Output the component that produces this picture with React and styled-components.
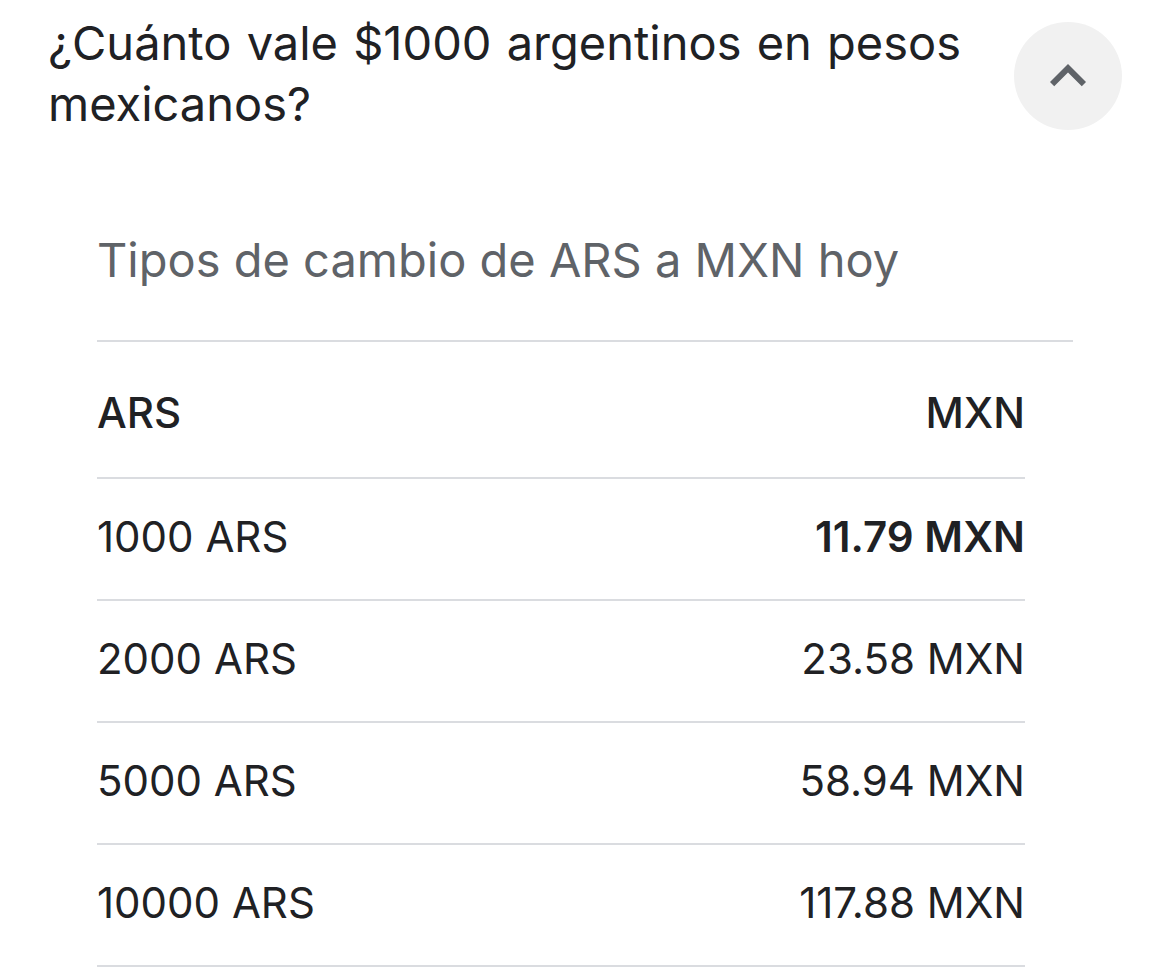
import React from 'react'
import styled, { createGlobalStyle } from 'styled-components'

const GlobalStyle = createGlobalStyle`
  body {
    margin: 0;
    background: #fff;
    font-family: Inter, Roboto, "Liberation Sans", sans-serif;
    color: #202124;
  }
`

const rates = [
  { ars: '1000 ARS', mxn: '11.79 MXN', strong: true },
  { ars: '2000 ARS', mxn: '23.58 MXN' },
  { ars: '5000 ARS', mxn: '58.94 MXN' },
  { ars: '10000 ARS', mxn: '117.88 MXN' },
]

export default function App() {
  return (
    <Page>
      <GlobalStyle />
      <Header>
        <Question>¿Cuánto vale $1000 argentinos en pesos mexicanos?</Question>
        <ToggleButton aria-label='Contraer'>
          <svg width='72' height='72' viewBox='0 0 24 24'>
            <path fill='#5f6368' d='M7.41 15.41L12 10.83l4.59 4.58L18 14l-6-6-6 6z' />
          </svg>
        </ToggleButton>
      </Header>
      <Card>
        <CardTitle>Tipos de cambio de ARS a MXN hoy</CardTitle>
        <Table>
          <HeadRow>
            <span>ARS</span>
            <span>MXN</span>
          </HeadRow>
          {rates.map(r => (
            <Row key={r.ars}>
              <span>{r.ars}</span>
              <Value strong={r.strong}>{r.mxn}</Value>
            </Row>
          ))}
        </Table>
      </Card>
    </Page>
  )
}

const Page = styled.div`
  width: 1170px;
  height: 968px;
  overflow: hidden;
`

const Header = styled.div`
  display: flex;
  justify-content: space-between;
  align-items: flex-start;
  padding: 12px 48px 0 48px;
`

const Question = styled.h1`
  margin: 0;
  max-width: 940px;
  font-size: 47px;
  line-height: 61px;
  font-weight: 400;
  word-spacing: 2px;
  color: #202124;
`

const ToggleButton = styled.button`
  flex: none;
  width: 108px;
  height: 108px;
  margin-top: 10px;
  border: none;
  border-radius: 50%;
  background: #f1f1f1;
  display: flex;
  align-items: center;
  justify-content: center;
  padding: 0;
`

const Card = styled.div`
  margin: 0 0 0 97px;
  width: 976px;
`

const CardTitle = styled.div`
  height: 208px;
  box-sizing: border-box;
  padding-top: 96px;
  font-size: 47px;
  line-height: 60px;
  color: #5f6368;
  border-bottom: 2px solid #dadce0;
`

const Table = styled.div`
  width: 928px;
`

const HeadRow = styled.div`
  display: flex;
  justify-content: space-between;
  align-items: center;
  height: 137px;
  box-sizing: border-box;
  padding-top: 5px;
  border-bottom: 2px solid #dadce0;
  font-size: 42px;
  font-weight: 500;
  color: #202124;
`

const Row = styled.div`
  display: flex;
  justify-content: space-between;
  align-items: center;
  height: 122px;
  box-sizing: border-box;
  padding-bottom: 6px;
  border-bottom: 2px solid #dadce0;
  font-size: 42px;
  color: #202124;
`

const Value = styled.span`
  font-weight: ${p => (p.strong ? 600 : 400)};
`
